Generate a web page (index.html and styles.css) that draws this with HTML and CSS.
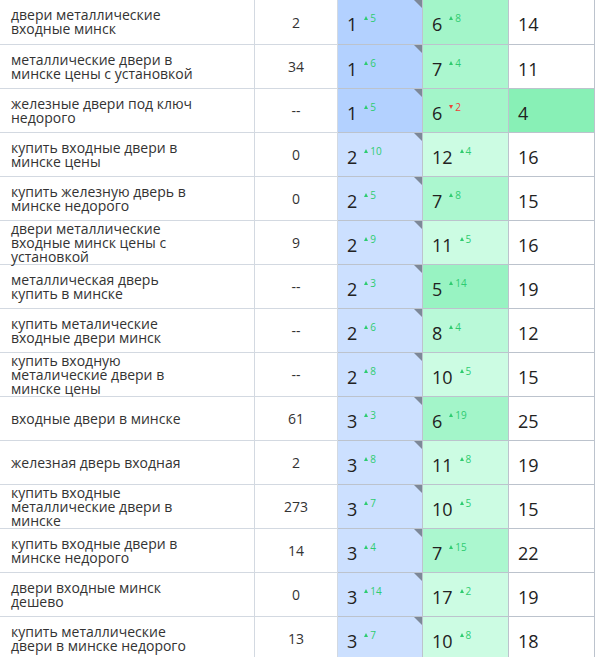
FILE: index.html
```html
<!DOCTYPE html>
<html lang="ru">
<head>
<meta charset="utf-8">
<link rel="stylesheet" href="styles.css">
</head>
<body>
<table class="grid">
  <colgroup>
    <col class="c-key"><col class="c-freq"><col class="c-pos"><col class="c-pos2"><col class="c-pos3">
  </colgroup>
  <tbody>
    <tr>
      <td class="key">двери металлические<br>входные минск</td>
      <td class="freq">2</td>
      <td class="pos blue-1"><span class="num">1</span><span class="delta up"><i></i>5</span><span class="corner"></span></td>
      <td class="pos g6"><span class="num">6</span><span class="delta up"><i></i>8</span></td>
      <td class="pos"><span class="num">14</span></td>
    </tr>
    <tr>
      <td class="key">металлические двери в<br>минске цены с установкой</td>
      <td class="freq">34</td>
      <td class="pos blue-1"><span class="num">1</span><span class="delta up"><i></i>6</span><span class="corner"></span></td>
      <td class="pos g7"><span class="num">7</span><span class="delta up"><i></i>4</span></td>
      <td class="pos"><span class="num">11</span></td>
    </tr>
    <tr>
      <td class="key">железные двери под ключ<br>недорого</td>
      <td class="freq">--</td>
      <td class="pos blue-1"><span class="num">1</span><span class="delta up"><i></i>5</span><span class="corner"></span></td>
      <td class="pos g6"><span class="num">6</span><span class="delta down"><i></i>2</span></td>
      <td class="pos g4"><span class="num">4</span></td>
    </tr>
    <tr>
      <td class="key">купить входные двери в<br>минске цены</td>
      <td class="freq">0</td>
      <td class="pos blue-2"><span class="num">2</span><span class="delta up"><i></i>10</span><span class="corner"></span></td>
      <td class="pos gl"><span class="num">12</span><span class="delta up"><i></i>4</span></td>
      <td class="pos"><span class="num">16</span></td>
    </tr>
    <tr>
      <td class="key">купить железную дверь в<br>минске недорого</td>
      <td class="freq">0</td>
      <td class="pos blue-2"><span class="num">2</span><span class="delta up"><i></i>5</span><span class="corner"></span></td>
      <td class="pos g7"><span class="num">7</span><span class="delta up"><i></i>8</span></td>
      <td class="pos"><span class="num">15</span></td>
    </tr>
    <tr>
      <td class="key">двери металлические<br>входные минск цены с<br>установкой</td>
      <td class="freq">9</td>
      <td class="pos blue-2"><span class="num">2</span><span class="delta up"><i></i>9</span><span class="corner"></span></td>
      <td class="pos gl"><span class="num">11</span><span class="delta up"><i></i>5</span></td>
      <td class="pos"><span class="num">16</span></td>
    </tr>
    <tr>
      <td class="key">металлическая дверь<br>купить в минске</td>
      <td class="freq">--</td>
      <td class="pos blue-2"><span class="num">2</span><span class="delta up"><i></i>3</span><span class="corner"></span></td>
      <td class="pos g5"><span class="num">5</span><span class="delta up"><i></i>14</span></td>
      <td class="pos"><span class="num">19</span></td>
    </tr>
    <tr>
      <td class="key">купить металические<br>входные двери минск</td>
      <td class="freq">--</td>
      <td class="pos blue-2"><span class="num">2</span><span class="delta up"><i></i>6</span><span class="corner"></span></td>
      <td class="pos g8"><span class="num">8</span><span class="delta up"><i></i>4</span></td>
      <td class="pos"><span class="num">12</span></td>
    </tr>
    <tr>
      <td class="key">купить входную<br>металические двери в<br>минске цены</td>
      <td class="freq">--</td>
      <td class="pos blue-2"><span class="num">2</span><span class="delta up"><i></i>8</span><span class="corner"></span></td>
      <td class="pos gl"><span class="num">10</span><span class="delta up"><i></i>5</span></td>
      <td class="pos"><span class="num">15</span></td>
    </tr>
    <tr>
      <td class="key">входные двери в минске</td>
      <td class="freq">61</td>
      <td class="pos blue-2"><span class="num">3</span><span class="delta up"><i></i>3</span><span class="corner"></span></td>
      <td class="pos g6"><span class="num">6</span><span class="delta up"><i></i>19</span></td>
      <td class="pos"><span class="num">25</span></td>
    </tr>
    <tr>
      <td class="key">железная дверь входная</td>
      <td class="freq">2</td>
      <td class="pos blue-2"><span class="num">3</span><span class="delta up"><i></i>8</span><span class="corner"></span></td>
      <td class="pos gl"><span class="num">11</span><span class="delta up"><i></i>8</span></td>
      <td class="pos"><span class="num">19</span></td>
    </tr>
    <tr>
      <td class="key">купить входные<br>металлические двери в<br>минске</td>
      <td class="freq">273</td>
      <td class="pos blue-2"><span class="num">3</span><span class="delta up"><i></i>7</span><span class="corner"></span></td>
      <td class="pos gl"><span class="num">10</span><span class="delta up"><i></i>5</span></td>
      <td class="pos"><span class="num">15</span></td>
    </tr>
    <tr>
      <td class="key">купить входные двери в<br>минске недорого</td>
      <td class="freq">14</td>
      <td class="pos blue-2"><span class="num">3</span><span class="delta up"><i></i>4</span><span class="corner"></span></td>
      <td class="pos g7"><span class="num">7</span><span class="delta up"><i></i>15</span></td>
      <td class="pos"><span class="num">22</span></td>
    </tr>
    <tr>
      <td class="key">двери входные минск<br>дешево</td>
      <td class="freq">0</td>
      <td class="pos blue-2"><span class="num">3</span><span class="delta up"><i></i>14</span><span class="corner"></span></td>
      <td class="pos gl"><span class="num">17</span><span class="delta up"><i></i>2</span></td>
      <td class="pos"><span class="num">19</span></td>
    </tr>
    <tr>
      <td class="key">купить металлические<br>двери в минске недорого</td>
      <td class="freq">13</td>
      <td class="pos blue-2"><span class="num">3</span><span class="delta up"><i></i>7</span><span class="corner"></span></td>
      <td class="pos gl"><span class="num">10</span><span class="delta up"><i></i>8</span></td>
      <td class="pos"><span class="num">18</span></td>
    </tr>
  </tbody>
</table>
</body>
</html>
```

FILE: styles.css
```css
html, body {
  margin: 0;
  padding: 0;
  background: #ffffff;
}

body {
  font-family: "Open Sans", "Noto Sans", sans-serif;
  color: #333333;
  overflow: hidden;
}

.grid {
  table-layout: fixed;
  border-collapse: separate;
  border-spacing: 0;
  width: 595px;
}

.c-key { width: 255px; }
.c-freq { width: 83px; }
.c-pos { width: 85px; }
.c-pos2 { width: 86px; }
.c-pos3 { width: 86px; }

.grid td {
  box-sizing: border-box;
  height: 44px;
  border-top: 1px solid #d3d9e1;
  border-right: 1px solid #d3d9e1;
  vertical-align: middle;
  padding: 0;
}

.grid tr:first-child td {
  border-top: none;
  height: 44px;
}

.key {
  font-size: 14px;
  line-height: 14px;
  padding: 0 6px 0 11px !important;
  color: #333333;
}

.freq {
  font-size: 14px;
  text-align: center;
  color: #333333;
}

.pos {
  position: relative;
  padding: 0 0 0 9px !important;
  white-space: nowrap;
  border-color: #bcc3cd !important;
}

.num {
  font-size: 18px;
  line-height: 18px;
  color: #222222;
  display: inline-block;
  vertical-align: middle;
  padding-top: 2px;
}

.delta {
  display: inline-block;
  vertical-align: middle;
  font-size: 10px;
  line-height: 10px;
  margin-left: 7px;
  margin-top: -10px;
}

.delta i {
  display: inline-block;
  width: 0;
  height: 0;
  border-left: 2px solid transparent;
  border-right: 2px solid transparent;
  margin-right: 2px;
  vertical-align: 2px;
}

.up { color: #2ecc71; }
.up i { border-bottom: 4px solid #2ecc71; }

.down { color: #ee4138; }
.down i { border-top: 4px solid #ee4138; }

.corner {
  position: absolute;
  top: 0;
  right: 0;
  width: 0;
  height: 0;
  border-left: 8px solid transparent;
  border-top: 8px solid #7d8898;
}

.blue-1 { background: #b3d1ff; }
.blue-2 { background: #cce0ff; }

.g4 { background: #88f0b6; }
.g5 { background: #98f3c2; }
.g6 { background: #a3f5c9; }
.g7 { background: #abf7cf; }
.g8 { background: #b9f9d8; }
.gl { background: #ccfce3; }
```
